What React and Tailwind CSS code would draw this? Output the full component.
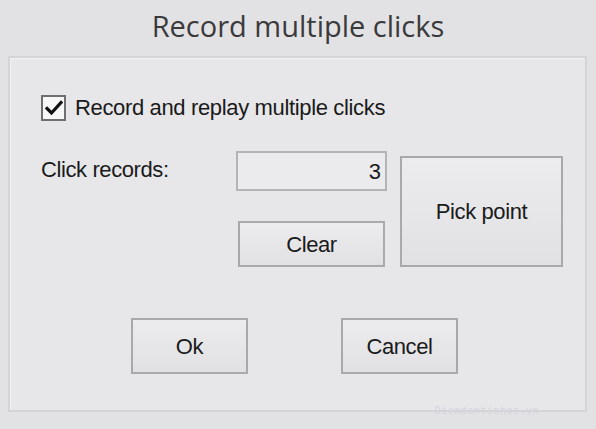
import React from 'react';

const font = { fontFamily: '"Liberation Sans", Arial, sans-serif' };

const Button = ({ children, className = '' }) => (
  <button
    className={`border-2 border-[#a9a9ab] bg-gradient-to-b from-[#ececee] to-[#e1e1e3] text-[22px] text-[#1a1a1a] tracking-[-0.4px] ${className}`}
    style={font}
  >
    {children}
  </button>
);

const App = () => {
  return (
    <div className="w-[596px] h-[429px] bg-[#e2e2e4] flex flex-col overflow-hidden" style={font}>
      <h1
        className="h-[56px] flex items-center justify-center pb-[4px] text-[29px] text-[#3a3a3c]"
        style={{ fontFamily: '"Open Sans", "Noto Sans", sans-serif' }}
      >
        Record multiple clicks
      </h1>

      <div className="mx-[8px] w-[579px] h-[356px] border-2 border-[#d4d4d6] bg-[#e7e7e9] shadow-[inset_1px_1px_0_#f2f2f4] relative">
        <div className="pl-[31px] pt-[34px]">
          <label className="flex items-center gap-[9px]">
            <span className="w-[25px] h-[26px] border-2 border-[#6f6f71] bg-[#f7f7f7] flex items-center justify-center">
              <svg width="18" height="16" viewBox="0 0 18 16">
                <path d="M2 8.5 L6.5 13 L16 2.5" fill="none" stroke="#111" strokeWidth="3.2" strokeLinecap="square" />
              </svg>
            </span>
            <span className="text-[22px] text-[#1a1a1a] tracking-[-0.35px] -mt-[1px]">Record and replay multiple clicks</span>
          </label>

          <div className="flex mt-[27px]">
            <div className="w-[195px] pt-[2px] text-[22px] text-[#1a1a1a] tracking-[-0.4px]">Click records:</div>
            <div className="flex flex-col">
              <div className="w-[151px] h-[40px] border-2 border-[#b4b4b6] bg-[#ebebed] flex items-center justify-end pr-[4px] text-[22px] text-[#1a1a1a]">
                3
              </div>
              <Button className="ml-[2px] mt-[30px] w-[147px] h-[46px]">Clear</Button>
            </div>
            <Button className="ml-[13px] mt-[5px] w-[163px] h-[111px]">Pick point</Button>
          </div>

          <div className="flex mt-[51px] pl-[90px] gap-[93px]">
            <Button className="w-[117px] h-[56px]">Ok</Button>
            <Button className="w-[117px] h-[56px]">Cancel</Button>
          </div>
        </div>

        <span
          className="absolute right-[46px] bottom-[-8px] text-[10px] text-[#d4d4de] tracking-[0.5px]"
          style={{ fontFamily: '"DejaVu Sans Mono", monospace' }}
        >
          Diendantinhoc.vn
        </span>
      </div>
    </div>
  );
};

export default App;
